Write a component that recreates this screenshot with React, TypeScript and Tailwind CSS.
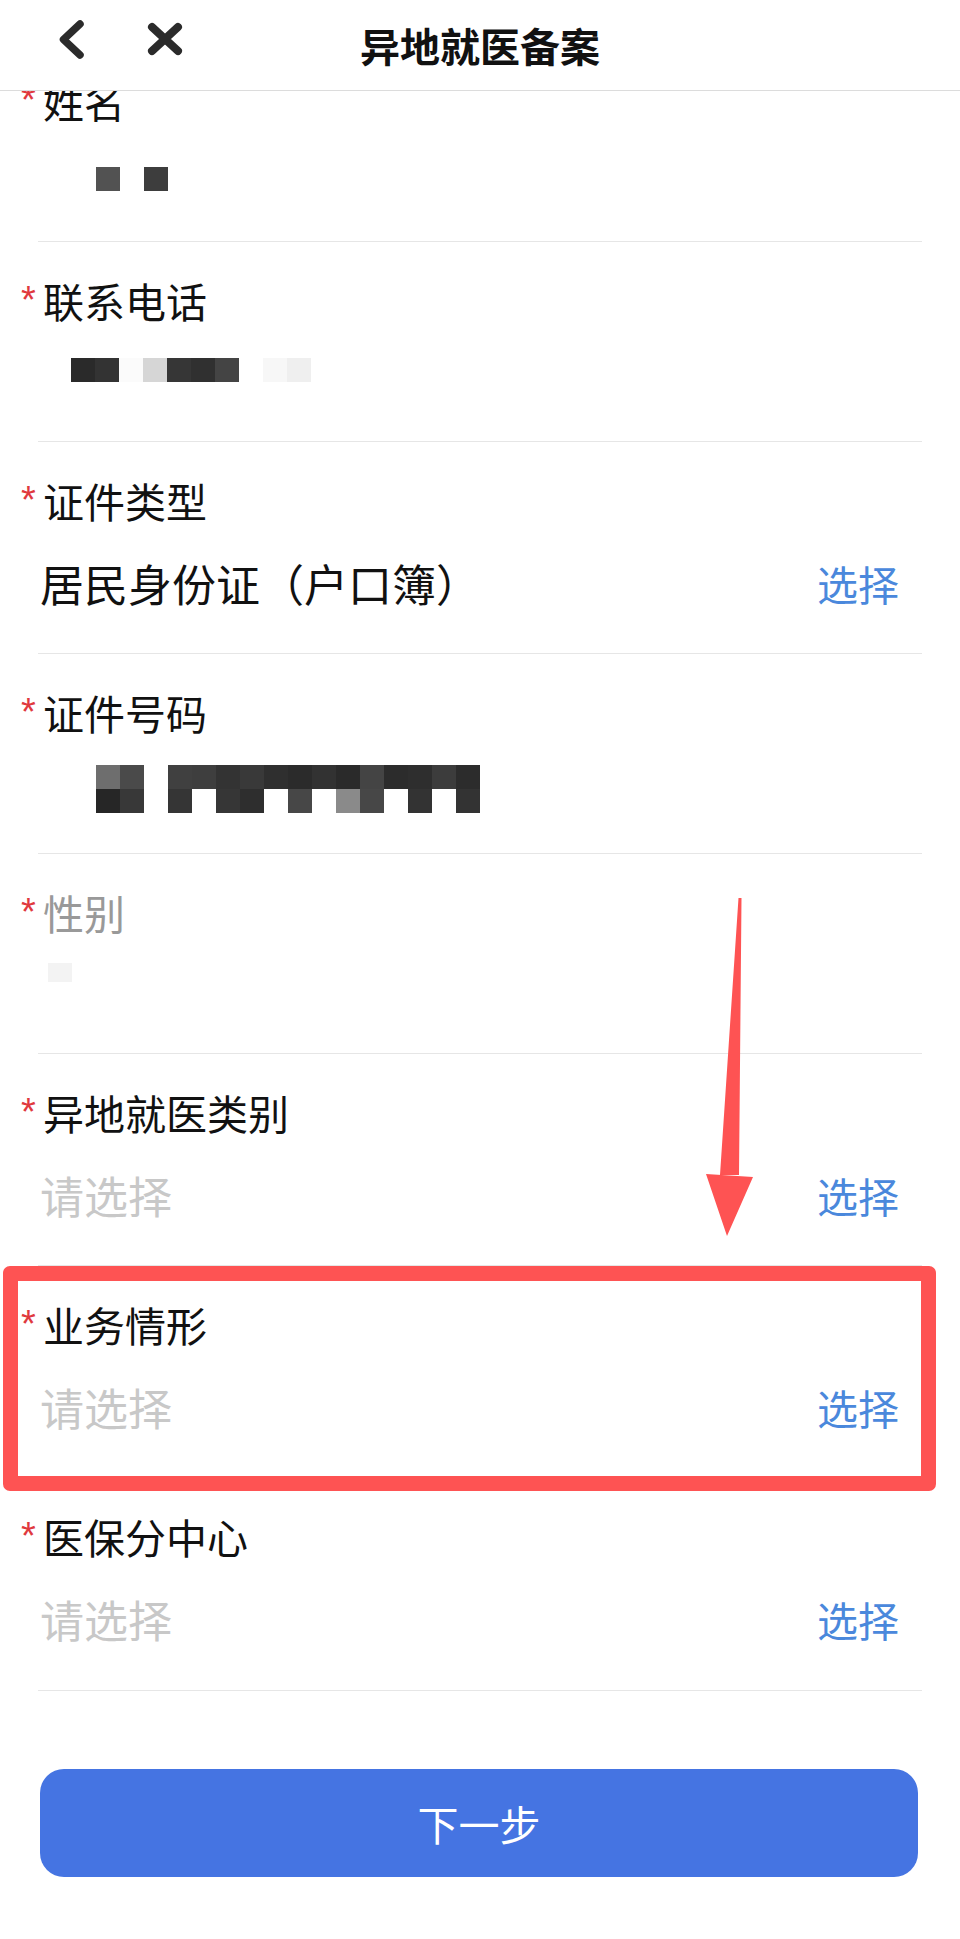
import React from "react";

type Mosaic = { offset: string; top: string; rows: string[][] };

const nameMosaic: Mosaic = {
  offset: "ml-[58px]",
  top: "mt-[39px]",
  rows: [["bg-[#525252]", "bg-transparent", "bg-[#3d3d3d]"]],
};

const phoneMosaic: Mosaic = {
  offset: "ml-[33px]",
  top: "mt-[30px]",
  rows: [
    [
      "bg-[#2a2a2a]",
      "bg-[#333333]",
      "bg-[#fbfbfb]",
      "bg-[#d6d6d6]",
      "bg-[#363636]",
      "bg-[#303030]",
      "bg-[#444444]",
      "bg-transparent",
      "bg-[#f7f7f7]",
      "bg-[#efefef]",
    ],
  ],
};

const idMosaic: Mosaic = {
  offset: "ml-[58px]",
  top: "mt-[25px]",
  rows: [
    [
      "bg-[#6e6e6e]", "bg-[#4a4a4a]", "bg-transparent",
      "bg-[#404040]", "bg-[#3e3e3e]", "bg-[#333333]", "bg-[#393939]", "bg-[#2f2f2f]",
      "bg-[#2b2b2b]", "bg-[#323232]", "bg-[#2a2a2a]", "bg-[#444444]", "bg-[#2c2c2c]",
      "bg-[#2e2e2e]", "bg-[#3c3c3c]", "bg-[#2c2c2c]",
    ],
    [
      "bg-[#262626]", "bg-[#383838]", "bg-transparent",
      "bg-[#353535]", "bg-transparent", "bg-[#363636]", "bg-[#2e2e2e]", "bg-transparent",
      "bg-[#474747]", "bg-transparent", "bg-[#8a8a8a]", "bg-[#474747]", "bg-transparent",
      "bg-[#333333]", "bg-transparent", "bg-[#333333]",
    ],
  ],
};

function Label({ text, muted }: { text: string; muted?: boolean }) {
  return (
    <div className="flex items-start -ml-[17px] h-[56px]">
      <span className="w-[22px] h-[38px] mt-[9px] text-[38px] leading-[38px] text-[#e0393e] font-['Liberation_Sans',sans-serif]">
        *
      </span>
      <span className={`text-[41px] leading-[56px] ${muted ? "text-[#999999]" : "text-[#111111]"}`}>
        {text}
      </span>
    </div>
  );
}

function MosaicRow({ label, mosaic, muted }: { label: string; mosaic: Mosaic; muted?: boolean }) {
  return (
    <div className="h-[200px] pt-[30px] border-b border-[#e6e6e6]">
      <Label text={label} muted={muted} />
      <div className={`${mosaic.offset} ${mosaic.top} flex flex-col`}>
        {mosaic.rows.map((row, i) => (
          <div key={i} className="flex">
            {row.map((c, j) => (
              <div key={j} className={`w-[24px] h-[24px] ${c}`} />
            ))}
          </div>
        ))}
      </div>
    </div>
  );
}

function SelectRow({ label, value, last }: { label: string; value?: string; last?: boolean }) {
  return (
    <div className={`${last ? "h-[213px]" : "h-[212px]"} pt-[30px] border-b border-[#e6e6e6]`}>
      <Label text={label} />
      <div className="h-[110px] flex items-center justify-between pl-[2px] pr-[23px]">
        <span className={`text-[44px] leading-[60px] ${value ? "text-[#111111]" : "text-[#c8c8c8]"}`}>
          {value ?? "请选择"}
        </span>
        <span className="text-[41px] leading-[60px] text-[#4a88dc]">选择</span>
      </div>
    </div>
  );
}

export default function App() {
  return (
    <div className="relative w-[960px] h-[1939px] bg-white overflow-hidden font-['Noto_Sans_CJK_SC','Liberation_Sans',sans-serif]">
      {/* 顶部导航 */}
      <header className="relative z-10 flex items-center h-[91px] bg-white border-b border-[#dcdcdc]">
        <div className="w-[200px] flex items-center pl-[54px]">
          <svg className="w-[36px] h-[90px]" viewBox="54 0 36 90" fill="none">
            <path d="M80 24 L63.5 39.5 L80 55" stroke="#2b2b2b" strokeWidth="7.5" strokeLinecap="round" strokeLinejoin="round" />
          </svg>
          <svg className="ml-[50px] w-[50px] h-[90px]" viewBox="140 0 50 90" fill="none">
            <path d="M152 27 L178 51 M178 27 L152 51" stroke="#2b2b2b" strokeWidth="8" strokeLinecap="round" />
          </svg>
        </div>
        <h1 className="flex-1 text-center text-[40px] leading-[56px] font-bold text-[#111111]">异地就医备案</h1>
        <div className="w-[200px]" />
      </header>

      {/* 表单（已向上滚动） */}
      <div className="overflow-hidden">
        <div className="-mt-[49px] mx-[38px]">
          <MosaicRow label="姓名" mosaic={nameMosaic} />
          <MosaicRow label="联系电话" mosaic={phoneMosaic} />
          <SelectRow label="证件类型" value="居民身份证（户口簿）" />
          <MosaicRow label="证件号码" mosaic={idMosaic} />
          <div className="h-[200px] pt-[30px] border-b border-[#e6e6e6]">
            <Label text="性别" muted />
            <div className="ml-[10px] mt-[23px] w-[24px] h-[19px] bg-[#f3f3f3]" />
          </div>
          <SelectRow label="异地就医类别" />
          <SelectRow label="业务情形" />
          <SelectRow label="医保分中心" last />
        </div>

        <button className="mt-[78px] ml-[40px] w-[878px] h-[108px] rounded-[24px] bg-[#4574e2] text-white text-[41px] leading-[56px]">
          下一步
        </button>
      </div>

      {/* 标注：红框与箭头 */}
      <div className="absolute left-[3px] top-[1266px] w-[933px] h-[225px] border-[15px] border-[#fe5353] rounded-[7px]" />
      <svg className="absolute left-[700px] top-[890px] w-[60px] h-[350px]" viewBox="700 890 60 350">
        <path d="M738.5 898 L741.5 898 L739 1175 L720 1175 Z M706 1174 L753 1177 L727 1236 Z" fill="#fe5353" />
      </svg>
    </div>
  );
}
